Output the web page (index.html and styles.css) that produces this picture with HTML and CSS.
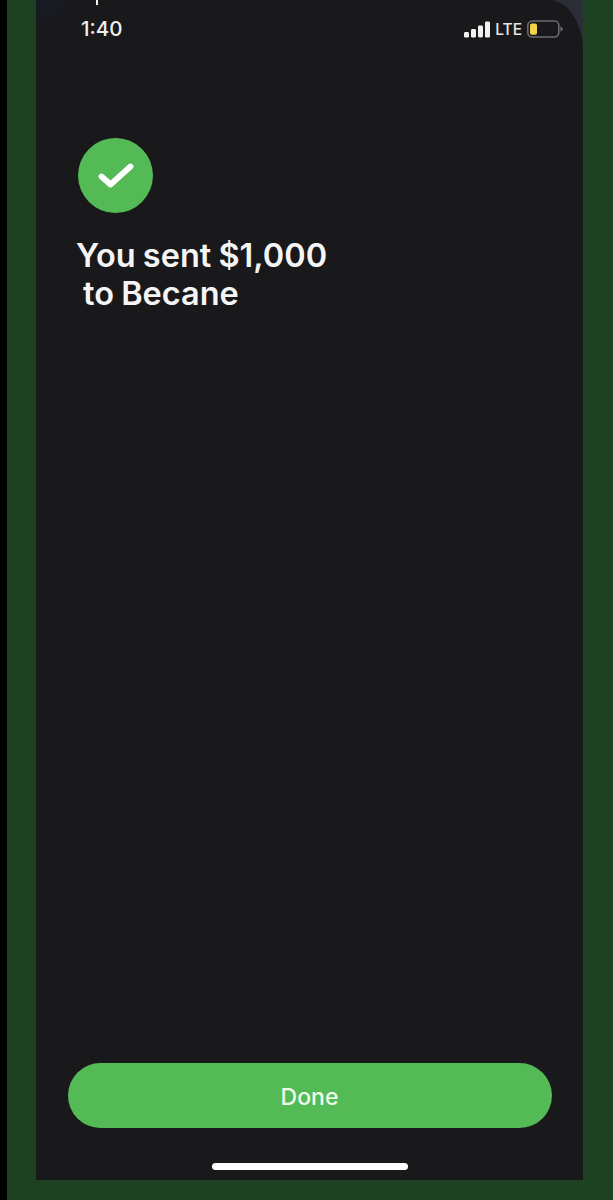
FILE: index.html
```html
<!DOCTYPE html>
<html lang="en">
<head>
<meta charset="utf-8">
<title>Payment sent</title>
<link rel="stylesheet" href="styles.css">
</head>
<body>
<div class="backdrop">
  <span class="notch-tick"></span>
  <div class="bezel">
    <main class="phone">
      <header class="status">
        <span class="time">1:40</span>
        <div class="indicators">
          <svg class="signal" width="26" height="17" viewBox="0 0 26 17" aria-hidden="true">
            <rect x="0" y="11" width="5" height="5.6" rx="1.4" fill="#f2f2f2"/>
            <rect x="7" y="8" width="5" height="8.6" rx="1.4" fill="#f2f2f2"/>
            <rect x="14" y="4.5" width="5" height="12" rx="1.4" fill="#f2f2f2"/>
            <rect x="21" y="0.5" width="5" height="16.1" rx="1.4" fill="#f2f2f2"/>
          </svg>
          <span class="lte">LTE</span>
          <svg class="battery" width="36" height="18" viewBox="0 0 36 18" aria-hidden="true">
            <rect x="0.8" y="1" width="31" height="16" rx="4.5" fill="none" stroke="#6b6c6f" stroke-width="1.6"/>
            <rect x="3" y="3.4" width="7" height="11.4" rx="1.8" fill="#f6d447"/>
            <path d="M33.4 6.5c1.6.4 2.4 1.3 2.4 2.5s-.8 2.1-2.4 2.5z" fill="#6b6c6f"/>
          </svg>
        </div>
      </header>
      <section class="content">
        <div class="check">
          <svg width="36" height="28" viewBox="0 0 36 28" aria-hidden="true">
            <path d="M3.5 14.5 L12.5 22.5 L32.5 4.5" fill="none" stroke="#fff" stroke-width="5.8" stroke-linecap="round" stroke-linejoin="round"/>
          </svg>
        </div>
        <h1 class="message">You sent $1,000<span class="message-line">to Becane</span></h1>
      </section>
      <footer class="actions">
        <button class="done" type="button">Done</button>
        <span class="home-bar"></span>
      </footer>
    </main>
  </div>
</div>
</body>
</html>
```
FILE: styles.css
```css
* { box-sizing: border-box; }
html, body { margin: 0; padding: 0; background: #1e4122; }
body { height: 1200px; overflow: hidden; border-left: 7px solid #000; font-family: Inter, "Liberation Sans", sans-serif; }
.backdrop { position: relative; height: 1200px; padding: 0 30px 20px 29px; background: #1e4122; }
.notch-tick { position: absolute; left: 89px; top: 0; width: 2px; height: 5px; background: #f1f1f1; }
.bezel { height: 1180px; background: #2a2f37; }
.phone {
  height: 1180px;
  display: flex;
  flex-direction: column;
  background: radial-gradient(50px 30px at 0 0, #161b27, rgba(25, 25, 27, 0)), #19191b;
  border-top-right-radius: 34px 50px;
}
.status { display: flex; justify-content: space-between; align-items: center; padding: 18px 20px 0 45px; height: 40px; }
.time { color: #efefef; font-size: 20.5px; font-weight: 500; line-height: 22px; }
.indicators { display: flex; align-items: center; gap: 5px; }
.lte { color: #e6e6e6; font-size: 15.5px; font-weight: 500; line-height: 20px; padding-top: 2px; }
.signal { display: block; margin-top: 1px; }
.battery { display: block; margin-left: 0; }
.content { flex: 1; padding: 98px 0 0 41px; }
.check { width: 75px; height: 75px; margin-left: 1px; border-radius: 50%; background: #54ba56; display: flex; align-items: center; justify-content: center; }
.message { margin: 24px 0 0 -1px; color: #f5f5f5; font-size: 32.5px; line-height: 38px; font-weight: 600; letter-spacing: 0; word-spacing: -1px; }
.message-line { display: block; padding-left: 7px; }
.actions { display: flex; flex-direction: column; align-items: center; padding: 0 31px 10px 31px; }
.done { width: 484px; height: 65px; border: 0; border-radius: 33px; background: #54ba56; color: #eefbea; font-family: inherit; font-size: 23px; font-weight: 500; padding-top: 4px; }
.home-bar { width: 196px; height: 7px; margin-top: 35px; border-radius: 4px; background: #fff; }
```
